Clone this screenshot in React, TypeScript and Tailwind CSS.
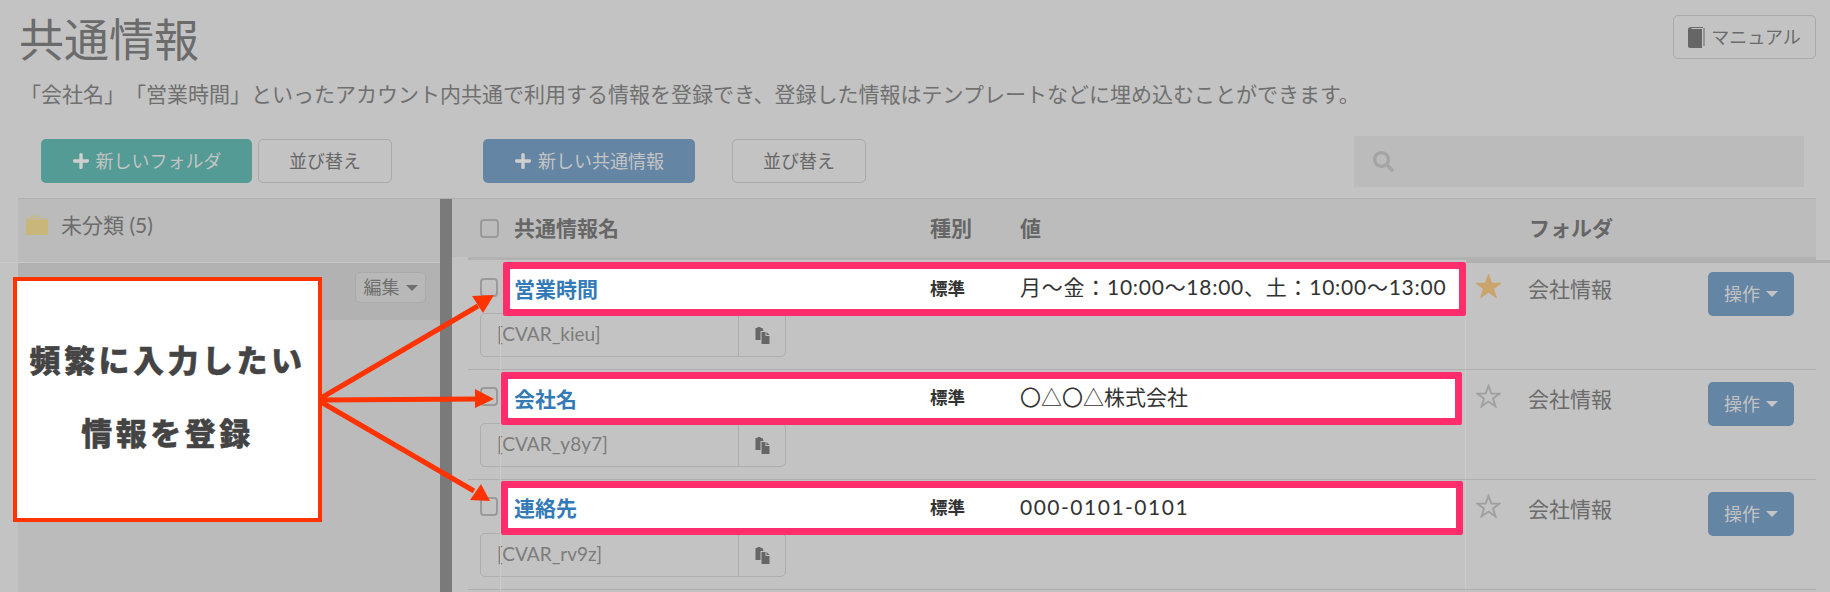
import { FaSearch, FaPlus } from 'react-icons/fa'

type RowData = {
  name: string
  value: string
  code: string
  starred: boolean
  rowClass: string
  boxClass: string
  inputClass: string
  valueClass: string
}

const rows: RowData[] = [
  {
    name: '営業時間',
    value: '月〜金：10:00〜18:00、土：10:00〜13:00',
    code: '[CVAR_kieu]',
    starred: true,
    rowClass: 'pt-[2px]',
    boxClass: 'ml-[5px] w-[963px] h-[54px] pl-[4px]',
    inputClass: '-mt-[3px]',
    valueClass: 'tracking-[0.74px] -mt-[4px]',
  },
  {
    name: '会社名',
    value: '〇△〇△株式会社',
    code: '[CVAR_y8y7]',
    starred: false,
    rowClass: 'pt-[2px]',
    boxClass: 'ml-[3px] w-[961px] h-[53px] pl-[6px]',
    inputClass: '-mt-[2px]',
    valueClass: '-mt-[4px]',
  },
  {
    name: '連絡先',
    value: '000-0101-0101',
    code: '[CVAR_rv9z]',
    starred: false,
    rowClass: 'pt-[1px]',
    boxClass: 'ml-[3px] w-[962px] h-[54px] pl-[6px]',
    inputClass: '-mt-[2px]',
    valueClass: 'tracking-[1.5px] -mt-[2px]',
  },
]

function Caret() {
  return <span className="inline-block w-0 h-0 border-x-[6px] border-x-transparent border-t-[6px] border-t-current" />
}

function Star({ filled }: { filled: boolean }) {
  return (
    <svg viewBox="0 0 26 24" className="w-[25px] h-[24px]">
      <polygon
        points="13,1.5 16,9.5 24.5,9.5 17.7,14.6 20.2,22.8 13,17.8 5.8,22.8 8.3,14.6 1.5,9.5 10,9.5"
        fill={filled ? '#c9a46c' : 'none'}
        stroke={filled ? '#c9a46c' : '#a0a0a0'}
        strokeWidth="2"
      />
    </svg>
  )
}

function CopyIcon() {
  return (
    <svg viewBox="0 0 16 18" className="w-[17px] h-[18px]" fill="#666">
      <path d="M1 2h2V1h3v1h2l1 3H6v9H1z" />
      <path d="M7 6h4v4h4v8H7z" />
      <path d="M12 6l3 3h-3z" />
    </svg>
  )
}

function BookIcon() {
  return (
    <svg viewBox="0 0 17 21" className="w-[17px] h-[21px]" fill="#666">
      <path d="M3 0h12v1H4C3 1 2.500 2 4 2h10v19H2C1 21 0 20 0 19V3C0 1 1 0 3 0z" />
      <path d="M15.500 1h1v18h-1z" />
    </svg>
  )
}

function FolderIcon() {
  return (
    <svg viewBox="0 0 22 20" className="w-[22px] h-[20px]" fill="#c9b67a">
      <path d="M3 2C5 0 12 0 14 2z" />
      <path d="M0 3h22v2H0z" opacity="0.6" />
      <path d="M0 5h22v15H0z" />
    </svg>
  )
}

function Row({ row }: { row: RowData }) {
  return (
    <div className="flex h-[110px] border-b border-[#b0b0b0]">
      <div className={`w-[998px] pl-[12px] border-r border-[#cbcbcb] ${row.rowClass}`}>
        <div className="flex items-center">
          <span className="w-[18px] h-[19px] shrink-0 -mt-[4px] rounded-[4px] border-2 border-[#9a9a9a]" />
          <div className={`relative z-10 flex items-center shrink-0 rounded-[2px] border-[7px] border-[#ff2d6b] bg-white ${row.boxClass}`}>
            <span className="w-[416px] text-[21px] font-bold text-[#337ab7]">{row.name}</span>
            <span className="w-[90px] text-[17.500px] font-bold text-[#333]">標準</span>
            <span className={`text-[21px] text-[#333] whitespace-nowrap ${row.valueClass}`}>{row.value}</span>
          </div>
        </div>
        <div className={`flex w-[306px] h-[44px] rounded-[5px] border border-[#aeaeae] ${row.inputClass}`}>
          <span className="flex-1 pl-[16px] pb-[2px] flex items-center text-[19px] text-[#7c7c7c]">{row.code}</span>
          <span className="w-[47px] flex items-center justify-center border-l border-[#aeaeae]">
            <CopyIcon />
          </span>
        </div>
      </div>
      <div className="flex-1 flex items-start">
        <div className="ml-[10px] mt-[14px] w-[52px]">
          <Star filled={row.starred} />
        </div>
        <span className="mt-[13px] w-[180px] text-[21px] text-[#6b6b6b]">会社情報</span>
        <button className="mt-[12px] w-[86px] h-[44px] rounded-[5px] bg-[#6585a5] text-[#c4c4c4] text-[18px] flex items-center justify-center gap-[6px]">
          操作 <Caret />
        </button>
      </div>
    </div>
  )
}

export default function App() {
  return (
    <div className="relative w-[1830px] h-[592px] overflow-hidden bg-[#c3c3c3] font-[Lato,'Noto_Sans_CJK_JP',sans-serif] text-[#6b6b6b]">
      <div className="flex justify-between items-start h-[75px] pl-[19px] pr-[14px] pt-[15px]">
        <h1 className="text-[45px] leading-[50px] text-[#6b6b6b]">共通情報</h1>
        <button className="flex items-center justify-center gap-[6px] w-[143px] h-[44px] rounded-[5px] border border-[#aaa] text-[18px]">
          <BookIcon />
          マニュアル
        </button>
      </div>

      <p className="h-[40px] pl-[20px] text-[21px] leading-[38px] whitespace-nowrap text-[#707070] [text-spacing-trim:space-all]">
        「会社名」「営業時間」といったアカウント内共通で利用する情報を登録でき、登録した情報はテンプレートなどに埋め込むことができます。
      </p>

      <div className="flex items-start mt-[21px] h-[51px] pl-[41px] pr-[26px]">
        <button className="mt-[3px] w-[211px] h-[44px] rounded-[5px] bg-[#549a95] text-[#c4c4c4] text-[18px] flex items-center justify-center gap-[6px]">
          <FaPlus className="w-[18px] h-[18px] text-[#cfcfcf]" />
          新しいフォルダ
        </button>
        <button className="mt-[3px] ml-[6px] w-[134px] h-[44px] rounded-[5px] border border-[#aaa] text-[18px] text-[#666]">並び替え</button>
        <button className="mt-[3px] ml-[91px] w-[212px] h-[44px] rounded-[5px] bg-[#6585a5] text-[#c4c4c4] text-[18px] flex items-center justify-center gap-[6px]">
          <FaPlus className="w-[18px] h-[18px] text-[#cfcfcf]" />
          新しい共通情報
        </button>
        <button className="mt-[3px] ml-[37px] w-[134px] h-[44px] rounded-[5px] border border-[#aaa] text-[18px] text-[#666]">並び替え</button>
        <div className="ml-auto w-[450px] h-[51px] bg-[#bbbbbb] flex items-center pl-[19px]">
          <FaSearch className="w-[21px] h-[21px] text-[#a4a4a4]" />
        </div>
      </div>

      <div className="flex ml-[18px] mr-[14px] mt-[11px] h-[394px] border-t border-[#b0b0b0]">
        <aside className="w-[422px] bg-[#bbbbbb]">
          <div className="flex items-center gap-[13px] h-[63px] pl-[8px] pb-[12px] text-[21px]">
            <FolderIcon />
            未分類 (5)
          </div>
          <div className="flex items-start justify-end h-[58px] pr-[14px] pt-[10px] bg-[#b2b2b2]">
            <button className="flex items-center justify-center gap-[6px] w-[71px] h-[31px] rounded-[5px] border border-[#aaaaaa] bg-[#b8b8b8] text-[18px] text-[#6f6f6f]">
              編集 <Caret />
            </button>
          </div>
        </aside>
        <div className="w-[12px] bg-[#7a7a7a]" />
        <main className="flex-1">
          <div className="flex items-center h-[58px] bg-[#bcbcbc] pl-[28px] text-[21px] font-bold text-[#666]">
            <span className="w-[19px] h-[19px] rounded-[4px] border-2 border-[#9a9a9a]" />
            <span className="ml-[15px] w-[416px]">共通情報名</span>
            <span className="w-[90px]">種別</span>
            <span className="w-[509px]">値</span>
            <span>フォルダ</span>
          </div>
          <div className="ml-[16px] h-[3px] bg-[#b2b2b2]" />
          <div className="ml-[16px]">
            {rows.map((row) => (
              <Row key={row.code} row={row} />
            ))}
          </div>
        </main>
      </div>

      {/* screenshot seams left by the highlighted capture */}
      <div className="absolute left-0 top-[262px] w-[440px] h-px bg-[#c9c9c9]" />
      <div className="absolute left-[1466px] right-0 top-[260px] h-[3px] bg-[#b0b0b0]" />
      <div className="absolute left-[500px] top-[316px] w-px h-[274px] bg-[#c9c9c9]" />

      <div className="absolute left-[13px] top-[277px] w-[309px] h-[245px] pb-[5px] border-[4px] border-[#ff3300] bg-white flex flex-col items-center justify-center gap-[38px] font-black text-[31px] leading-[35px] tracking-[3.500px] text-[#444] [-webkit-text-stroke:0.4px_#444]">
        <span>頻繁に入力したい</span>
        <span>情報を登録</span>
      </div>

      <svg className="absolute left-0 top-0 w-[1830px] h-[592px] pointer-events-none" viewBox="0 0 1830 592">
        <g stroke="#ff3300" strokeWidth="5" fill="none">
          <line x1="321" y1="398" x2="478" y2="306" />
          <line x1="321" y1="400" x2="478" y2="399" />
          <line x1="321" y1="402" x2="474" y2="491" />
        </g>
        <g fill="#ff3300">
          <polygon points="494,295 483,313 472,296" />
          <polygon points="494,399 475,408 475,389" />
          <polygon points="490,501 470,500 481,484" />
        </g>
      </svg>
    </div>
  )
}
